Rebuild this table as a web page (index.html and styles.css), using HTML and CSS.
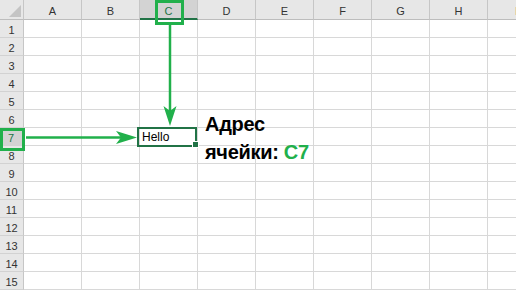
FILE: index.html
```html
<html>
	<head>
		<title>Sheet1</title>
		<link rel="stylesheet" href="styles.css">
	</head>
	<body>
		<div class="sheet">
			<div class="grid">
				<div class="hdr corner">
					<svg width="24" height="20"><polygon points="9,17 21,17 21,5" fill="#c4c4c4"/></svg>
				</div>
				<div class="hdr col">A</div>
				<div class="hdr col">B</div>
				<div class="hdr col sel-col">C</div>
				<div class="hdr col">D</div>
				<div class="hdr col">E</div>
				<div class="hdr col">F</div>
				<div class="hdr col">G</div>
				<div class="hdr col">H</div>
				<div class="hdr col">I</div>
			</div>
			<div class="grid" id="rows"></div>
		</div>

		<!-- highlight boxes and arrows drawn on top of the grid -->
		<svg class="marks" width="516" height="290">
			<rect x="1.5" y="129.5" width="22" height="20" fill="none" stroke="#21b04b" stroke-width="3"/>
			<rect x="156.5" y="1.5" width="26" height="22" fill="none" stroke="#21b04b" stroke-width="3"/>
			<line x1="170" y1="25" x2="170" y2="118" stroke="#21b04b" stroke-width="2.5"/>
			<polygon points="170,126 163.5,106 170,111 176.5,106" fill="#21b04b"/>
			<line x1="26" y1="137.5" x2="128" y2="137.5" stroke="#21b04b" stroke-width="2.5"/>
			<polygon points="137,137.5 116,131 121,137.5 116,144" fill="#21b04b"/>
		</svg>

		<div class="note">Адрес<br>ячейки: <span class="addr">C7</span></div>

		<script type="text/javascript">
			var rows = document.getElementById("rows");
			var html = "";
			for (var r = 1; r <= 15; r++) {
				html += '<div class="hdr num' + (r == 7 ? ' sel-row' : '') + '">' + r + '</div>';
				for (var c = 0; c < 9; c++) {
					if (r == 7 && c == 2) {
						html += '<div class="cell active">Hello<span class="handle"></span></div>';
					} else {
						html += '<div class="cell"></div>';
					}
				}
			}
			rows.innerHTML = html;
		</script>
	</body>
</html>
```

FILE: styles.css
```css
body {
  margin: 0;
  overflow: hidden;
  background: #fff;
  font-family: "Liberation Sans", Arial, sans-serif;
}

.sheet {
  width: 546px;
}

/* 24px row numbers, then 58px columns */
.grid {
  display: grid;
  grid-template-columns: 24px repeat(9, 58px);
}
.grid:first-child {
  grid-template-rows: 20px;
}
#rows {
  grid-auto-rows: 18px;
}

.hdr, .cell {
  box-sizing: border-box;
  border-right: 1px solid #d8d8d8;
  border-bottom: 1px solid #d8d8d8;
}

.hdr {
  background: #e7e7e7;
  color: #333;
  font-size: 11px;
  text-align: center;
}
.col {
  line-height: 19px;
  padding-top: 2px;
  border-right-color: #c6c6c6;
  border-bottom-color: #bdbdbd;
}
.corner {
  border-right-color: #c6c6c6;
  border-bottom-color: #bdbdbd;
}
.corner svg {
  display: block;
}
.num {
  line-height: 17px;
  padding-top: 2px;
  border-right-color: #c6c6c6;
  border-bottom-color: #d2d2d2;
}

/* selected column and row headers */
.sel-col {
  background: #d3d3d3;
  color: #217346;
  border-bottom: 2px solid #217346;
}
.sel-row {
  background: #d3d3d3;
  color: #217346;
  border-right: 2px solid #217346;
}

.cell {
  font-size: 12px;
  line-height: 17px;
  padding: 1px 0 0 2px;
  color: #000;
}
.active {
  position: relative;
}
.active:after {
  content: "";
  position: absolute;
  top: -1px;
  left: -3px;
  right: 0;
  bottom: -2px;
  border: 2px solid #217346;
}
.handle {
  position: absolute;
  right: -2px;
  bottom: -3px;
  width: 5px;
  height: 5px;
  background: #217346;
  border: 1px solid #fff;
  z-index: 1;
}

.marks {
  position: absolute;
  left: 0;
  top: 0;
}

.note {
  position: absolute;
  left: 205px;
  top: 110px;
  font-size: 20px;
  font-weight: bold;
  line-height: 28px;
  letter-spacing: -0.3px;
  color: #000;
}
.addr {
  color: #21b04b;
}
```
